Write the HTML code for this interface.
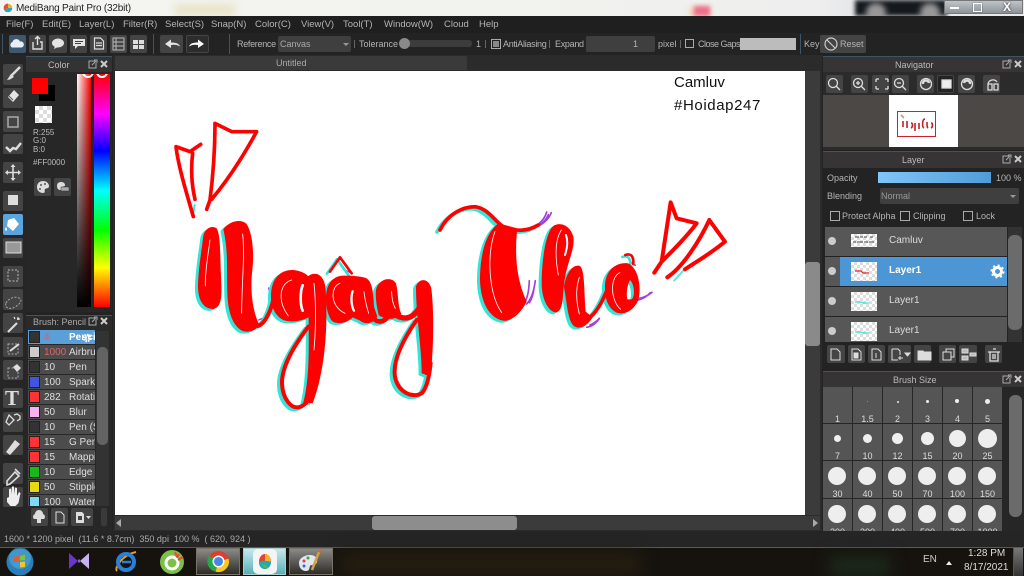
<!DOCTYPE html>
<html><head><meta charset="utf-8"><title>MediBang Paint Pro</title>
<style>
html,body{margin:0;padding:0;background:#222}
#r{position:relative;width:1024px;height:576px;overflow:hidden;background:#232323;font-family:"Liberation Sans",sans-serif;font-size:9px;color:#b4b4b4}
#r div,#r span.t,#r svg.a{position:absolute}
.t{position:absolute;white-space:nowrap;line-height:12px}
.m{font-size:9.500px}
.b{background:#444;border-radius:2px}
.h{background:#363434;border-top:1px solid #3f5566}
.c{color:#c8c8c8;text-align:center;line-height:14px}
.row{left:28px;width:67px;height:14px;background:#4c4c4c;overflow:hidden;color:#ddd;font-size:10px;line-height:15px}
.row i{position:absolute;left:1px;top:1px;width:11px;height:12px;border:1px solid #222;box-sizing:border-box}
.row u{position:absolute;left:16px;text-decoration:none}
.row s{position:absolute;left:41px;text-decoration:none;white-space:nowrap}
.cell{width:29px;background:#555;overflow:hidden;color:#ddd;text-align:center;font-size:9px}
.cell i{position:absolute;background:#eee;border-radius:50%}
.cell span{position:absolute;left:0;right:0;line-height:10px}
.lay{left:825px;width:182px;background:#575757;color:#ddd;overflow:hidden}
.chk{width:8px;height:8px;border:1px solid #aaa}
.thumb{background-color:#fff;background-image:linear-gradient(45deg,#ddd 25%,transparent 25%,transparent 75%,#ddd 75%),linear-gradient(45deg,#ddd 25%,transparent 25%,transparent 75%,#ddd 75%);background-size:6px 6px;background-position:0 0,3px 3px}
</style></head><body><div id="r">

<!-- title bar -->
<div style="left:0;top:0;width:1024px;height:16px;background:linear-gradient(90deg,#f4f4f2,#f2f2ee 50%,#eee 80%,#e6e8ea 850px)"></div>
<div style="left:175px;top:4px;width:60px;height:12px;background:#e8e4c8;filter:blur(4px)"></div>
<div style="left:690px;top:8px;width:20px;height:8px;background:#f3c9a0;filter:blur(3px)"></div>
<div style="left:694px;top:6px;width:16px;height:10px;background:#ee6f8c;filter:blur(2px)"></div>
<div style="left:855px;top:0;width:92px;height:16px;background:#15191e;filter:blur(2px)"></div>
<div style="left:866px;top:3px;width:20px;height:20px;border-radius:50%;background:#999;filter:blur(3px)"></div>
<div style="left:920px;top:3px;width:20px;height:20px;border-radius:50%;background:#999;filter:blur(3px)"></div>
<div style="left:944px;top:0;width:79px;height:14px;background:linear-gradient(#bfc4c8,#8e9398);border:1px solid #777;box-sizing:border-box"></div>
<div style="left:950px;top:7px;width:9px;height:2px;background:#fff"></div>
<div style="left:973px;top:3px;width:7px;height:7px;border:1px solid #fff;box-shadow:0 0 1px #333"></div>
<span class="t" style="left:1003px;top:0;color:#fff;font-size:12px;font-weight:bold;text-shadow:0 0 2px #222;line-height:14px">X</span>
<svg class="a" style="left:2px;top:2px" width="12" height="12" viewBox="0 0 12 12"><circle cx="6" cy="6" r="6" fill="#fff"/><path d="M6 1.500A4.500 4.500 0 0 0 2 8L6 6Z" fill="#e84f2f"/><path d="M6 1.500A4.500 4.500 0 0 1 10.400 6L6 6Z" fill="#f2b035"/><path d="M2 8A4.500 4.500 0 0 0 10.400 6L6 6Z" fill="#2aa6c8"/></svg>
<span class="t" style="left:16px;top:3px;color:#222;font-size:10px;letter-spacing:-.2px">MediBang Paint Pro (32bit)</span>

<!-- menu -->
<div style="left:0;top:16px;width:1024px;height:17px;background:#1f1f1f"></div>
<span class="t m" style="left:6px;top:19px">File(F)</span>
<span class="t m" style="left:42px;top:19px">Edit(E)</span>
<span class="t m" style="left:79px;top:19px">Layer(L)</span>
<span class="t m" style="left:123px;top:19px">Filter(R)</span>
<span class="t m" style="left:165px;top:19px">Select(S)</span>
<span class="t m" style="left:211px;top:19px">Snap(N)</span>
<span class="t m" style="left:255px;top:19px">Color(C)</span>
<span class="t m" style="left:301px;top:19px">View(V)</span>
<span class="t m" style="left:343px;top:19px">Tool(T)</span>
<span class="t m" style="left:384px;top:19px">Window(W)</span>
<span class="t m" style="left:444px;top:19px">Cloud</span>
<span class="t m" style="left:479px;top:19px">Help</span>

<!-- toolbar -->
<div style="left:0;top:33px;width:1024px;height:22px;background:#232323"></div>
<div style="left:2px;top:34px;width:1px;height:20px;background:#3a566c"></div>
<div style="left:153px;top:34px;width:1px;height:20px;background:#3a566c"></div>
<div style="left:229px;top:34px;width:1px;height:20px;background:#3a566c"></div>
<div style="left:800px;top:34px;width:1px;height:20px;background:#3a566c"></div>
<div class="b" style="left:9px;top:35px;width:17px;height:18px;background:#3e5870"></div>
<div class="b" style="left:29px;top:35px;width:17px;height:18px"></div>
<div class="b" style="left:49px;top:35px;width:18px;height:18px"></div>
<div class="b" style="left:70px;top:35px;width:17px;height:18px"></div>
<div class="b" style="left:90px;top:35px;width:17px;height:18px"></div>
<div class="b" style="left:110px;top:35px;width:17px;height:18px"></div>
<div class="b" style="left:130px;top:35px;width:17px;height:18px"></div>
<div class="b" style="left:160px;top:35px;width:23px;height:18px"></div>
<div class="b" style="left:186px;top:35px;width:23px;height:18px;background:#2d2d2d;border:1px solid #444;box-sizing:border-box"></div>
<svg class="a" style="left:0;top:33px" width="215" height="22" viewBox="0 0 215 22" fill="none">
<path d="M12 14.500a3 3 0 0 1 .5-5.500 4 4 0 0 1 7.500-.5 3 3 0 0 1 1.500 6Z" fill="#e8eef4"/>
<path d="M33 9v7h9V9h-2M37.500 12V4M35 6l2.500-2.500L40 6" stroke="#ddd" stroke-width="1.400"/>
<ellipse cx="58" cy="10" rx="6" ry="4.500" fill="#e4e4e4"/><path d="M55 13l-1 3 4-2Z" fill="#e4e4e4"/>
<path d="M73 6h12v7h-7l-3 3v-3h-2Z" fill="#e4e4e4"/><path d="M75 8.500h8M75 10.500h6" stroke="#444"/>
<path d="M94.500 5h6l3 3v8h-9Z M96 10h6M96 12.500h6" stroke="#ddd" stroke-width="1.200"/>
<path d="M113 5h11v12h-11Z M113 9h11M113 13h11M116 5v12" stroke="#bbb"/>
<path d="M133 7h5v4h-5ZM139 7h5v4h-5ZM133 12h5v4h-5ZM139 12h5v4h-5Z" fill="#ddd"/>
<path d="M165 11l6-4.500v3c5 0 8 1 9 4-3-2-6-2-9-1.500v3Z" fill="#e4e4e4"/>
<path d="M204 11l-6-4.500v3c-5 0-8 1-9 4 3-2 6-2 9-1.500v3Z" fill="#fff"/>
</svg>
<span class="t" style="left:237px;top:38px;letter-spacing:-.3px">Reference</span>
<div class="b" style="left:278px;top:36px;width:73px;height:16px;background:#3f3f3f"></div>
<span class="t" style="left:280px;top:38px;color:#aaa">Canvas</span>
<div style="left:343px;top:43px;width:0;height:0;border:3px solid transparent;border-top:3px solid #999"></div>
<div style="left:354px;top:40px;width:1px;height:8px;background:#666"></div>
<span class="t" style="left:359px;top:38px">Tolerance</span>
<div style="left:400px;top:40px;width:72px;height:7px;background:#3c3c3c;border-radius:3px"></div>
<div style="left:399px;top:38px;width:11px;height:11px;background:#8a8a8a;border-radius:50%"></div>
<span class="t" style="left:476px;top:38px">1</span>
<div style="left:485px;top:40px;width:1px;height:8px;background:#666"></div>
<div style="left:491px;top:39px;width:8px;height:8px;border:1px solid #aaa"></div>
<div style="left:493px;top:41px;width:6px;height:6px;background:#888"></div>
<span class="t" style="left:503px;top:38px;letter-spacing:-.3px">AntiAliasing</span>
<div style="left:549px;top:40px;width:1px;height:8px;background:#666"></div>
<span class="t" style="left:555px;top:38px;letter-spacing:-.3px">Expand</span>
<div class="b" style="left:586px;top:36px;width:69px;height:16px;background:#3f3f3f"></div>
<span class="t" style="left:633px;top:38px">1</span>
<span class="t" style="left:658px;top:38px">pixel</span>
<div style="left:680px;top:40px;width:1px;height:8px;background:#666"></div>
<div style="left:685px;top:39px;width:7px;height:7px;border:1px solid #aaa"></div>
<span class="t" style="left:698px;top:38px;letter-spacing:-.5px">Close Gaps</span>
<div style="left:740px;top:38px;width:56px;height:12px;background:#bcbcbc"></div>
<span class="t" style="left:804px;top:38px">Key</span>
<div class="b" style="left:820px;top:35px;width:46px;height:18px"></div>
<svg class="a" style="left:824px;top:37px" width="14" height="14" viewBox="0 0 14 14" fill="none" stroke="#ccc" stroke-width="1.200"><circle cx="7" cy="7" r="6"/><path d="M3 3l8 8"/></svg>
<span class="t" style="left:840px;top:38px">Reset</span>

<!-- left tools -->
<div style="left:0;top:55px;width:26px;height:476px;background:#262626"></div>
<div class="b" style="left:3px;top:64px;width:20px;height:21px"></div>
<div class="b" style="left:3px;top:88px;width:20px;height:20px"></div>
<div class="b" style="left:3px;top:111px;width:20px;height:21px"></div>
<div class="b" style="left:3px;top:134px;width:20px;height:20px"></div>
<div class="b" style="left:3px;top:162px;width:20px;height:21px"></div>
<div class="b" style="left:3px;top:191px;width:20px;height:20px"></div>
<div class="b" style="left:3px;top:214px;width:20px;height:21px;background:#5aa5de"></div>
<div class="b" style="left:3px;top:238px;width:20px;height:20px"></div>
<div class="b" style="left:3px;top:266px;width:20px;height:21px"></div>
<div class="b" style="left:3px;top:289px;width:20px;height:21px"></div>
<div class="b" style="left:3px;top:313px;width:20px;height:20px"></div>
<div class="b" style="left:3px;top:337px;width:20px;height:20px"></div>
<div class="b" style="left:3px;top:360px;width:20px;height:20px"></div>
<div class="b" style="left:3px;top:388px;width:20px;height:20px"></div>
<div class="b" style="left:3px;top:412px;width:20px;height:20px"></div>
<div class="b" style="left:3px;top:435px;width:20px;height:20px"></div>
<div class="b" style="left:3px;top:463px;width:20px;height:21px"></div>
<div class="b" style="left:3px;top:487px;width:20px;height:20px"></div>
<svg class="a" style="left:0;top:55px" width="26" height="460" viewBox="0 0 26 460" fill="none">
<path d="M20 12L11 21" stroke="#ddd" stroke-width="2.500"/><path d="M11 19l3 3-4 2.500-3 .5Z" fill="#ddd"/>
<path d="M14 35l5 5-6 7-5-5Z" fill="#e6e6e6"/><path d="M9 41l4 4" stroke="#555"/>
<rect x="8" y="62" width="10" height="10" stroke="#aaa" stroke-width="1.500"/>
<path d="M6 92l4 4 3-3 3 1 5-6" stroke="#ddd" stroke-width="2.500"/>
<path d="M13 111v13M7 117.500h12" stroke="#ddd" stroke-width="1.600"/><path d="M13 109l2.500 3h-5ZM13 126l2.500-3h-5ZM5 117.500l3-2.500v5ZM21 117.500l-3-2.500v5Z" fill="#ddd"/>
<rect x="8" y="140" width="10" height="10" fill="#ddd"/>
<path d="M8 165l6-2 5 6-6 7-6-5Z" fill="#fff"/><path d="M6 172q-2 3 0 4 2-1 0-4Z" fill="#fff"/>
<rect x="6" y="187" width="15" height="11" fill="#999" stroke="#ddd"/>
<rect x="8" y="215" width="10" height="11" stroke="#bbb" stroke-dasharray="2 1.500"/>
<path d="M6 248c3-5 9-7 13-5s1 6-4 9-11 1-9-4Z" stroke="#aaa" stroke-dasharray="2 1.500"/>
<path d="M8 277l9-9" stroke="#ddd" stroke-width="2"/><path d="M18 262v3M20 264h-3M14 262l1 2" stroke="#fff"/>
<rect x="8" y="289" width="10" height="10" stroke="#aaa" stroke-dasharray="2 1.500"/><path d="M10 296l9-7" stroke="#ddd" stroke-width="2"/>
<rect x="8" y="313" width="10" height="10" stroke="#aaa" stroke-dasharray="2 1.500"/><path d="M13 312l4-3 4 4-4 4Z" fill="#ddd"/>
<path d="M9 360l5 5-5 5-3-3ZM14 360l3-1 3 2v3l-3 2" stroke="#ddd" stroke-width="1.300"/>
<path d="M6 397l9-12 5 4-10 11Z" fill="#ddd"/>
<path d="M7 426l8-9 4 4-9 8-3 1Z M15 414l5 5" stroke="#ddd" stroke-width="1.600"/>
<path d="M7 447v-4l2-1v-8l2-.5v6l1-8 2 0v8l1-7 2 .5v8l2-4 1.500 1-2 10-3 3h-5Z" fill="#eee"/>
</svg>
<span class="t" style="left:5px;top:388px;color:#ddd;font:bold 21px 'Liberation Serif',serif;line-height:20px">T</span>

<!-- color panel -->
<div style="left:26px;top:57px;width:86px;height:255px;background:#272727"></div>
<div class="h c" style="left:26px;top:56px;width:86px;height:15px;background:#333"></div>
<span class="t" style="left:48px;top:59px;color:#bbb">Color</span>
<div style="left:39px;top:85px;width:16px;height:16px;background:#000"></div>
<div style="left:32px;top:78px;width:16px;height:16px;background:#f00"></div>
<div class="thumb" style="left:35px;top:106px;width:17px;height:17px;background-size:8px 8px;background-position:0 0,4px 4px"></div>
<span class="t" style="left:33px;top:127px;font-size:8px;color:#bbb">R:255</span>
<span class="t" style="left:33px;top:135px;font-size:8px;color:#bbb">G:0</span>
<span class="t" style="left:33px;top:144px;font-size:8px;color:#bbb">B:0</span>
<span class="t" style="left:33px;top:157px;font-size:8px;color:#bbb">#FF0000</span>
<div class="b" style="left:34px;top:178px;width:17px;height:18px"></div>
<div class="b" style="left:54px;top:178px;width:17px;height:18px"></div>
<svg class="a" style="left:34px;top:178px" width="38" height="18" viewBox="0 0 38 18"><path d="M3 9c0-4 3-6 6-6s6 2 6 5-3 2-4 3 1 4-2 4-6-2-6-6Z" fill="#ddd"/><circle cx="7" cy="7" r="1" fill="#555"/><circle cx="11" cy="6" r="1" fill="#555"/><circle cx="6" cy="11" r="1" fill="#555"/><path d="M23 8c0-3 2-4 4-4s4 1 4 3-2 1-3 2 0 3-2 3-3-2-3-4Z" fill="#ddd"/><rect x="27" y="9" width="8" height="4" fill="#aaa" stroke="#333" stroke-width=".5"/></svg>
<div style="left:77px;top:74px;width:14px;height:233px;background:linear-gradient(transparent,#000),linear-gradient(90deg,#fff,#f00)"></div>
<div style="left:94px;top:74px;width:16px;height:233px;background:linear-gradient(#f00,#f0f 17%,#00f 33%,#0ff 50%,#0f0 67%,#ff0 83%,#f00)"></div>
<div style="left:82px;top:66px;width:8px;height:8px;border:2px solid #fff;border-radius:50%;clip-path:inset(8px 0 0 0)"></div>
<div style="left:96px;top:66px;width:8px;height:8px;border:2px solid #fff;border-radius:50%;clip-path:inset(8px 0 0 0)"></div>
<svg class="a" style="left:87px;top:59px" width="22" height="11" viewBox="0 0 22 11" fill="none" stroke="#aaa"><path d="M8 2H2v7h7V4M5 6l4-4M7 1h3v3"/><path d="M14 2l6 6M20 2l-6 6" stroke="#ccc" stroke-width="2"/></svg>

<!-- brush panel -->
<div style="left:26px;top:315px;width:86px;height:216px;background:#272727"></div>
<div class="h" style="left:26px;top:315px;width:86px;height:15px;background:#2a2a2a"></div>
<span class="t" style="left:33px;top:316px;color:#aaa">Brush: Pencil</span>
<svg class="a" style="left:87px;top:316px" width="22" height="11" viewBox="0 0 22 11" fill="none" stroke="#aaa"><path d="M8 2H2v7h7V4M5 6l4-4M7 1h3v3"/><path d="M14 2l6 6M20 2l-6 6" stroke="#ccc" stroke-width="2"/></svg>
<div class="row" style="top:330px;background:#5a9fd8"><i style="background:#333"></i><u style="color:#e06060">4</u><s style="color:#fff;font-weight:bold">Pencil</s></div>
<svg class="a" style="left:82px;top:333px" width="10" height="10" viewBox="0 0 10 10"><circle cx="5" cy="5" r="3" fill="none" stroke="#fff" stroke-width="2.500" stroke-dasharray="1.500 .8"/></svg>
<div class="row" style="top:345px"><i style="background:#ccc"></i><u style="color:#d66">1000</u><s>Airbrush</s></div>
<div class="row" style="top:360px"><i style="background:#333"></i><u>10</u><s>Pen</s></div>
<div class="row" style="top:375px"><i style="background:#4055e0"></i><u>100</u><s>Sparkle</s></div>
<div class="row" style="top:390px"><i style="background:#f33"></i><u>282</u><s>Rotation</s></div>
<div class="row" style="top:405px"><i style="background:#f9b0f0"></i><u>50</u><s>Blur</s></div>
<div class="row" style="top:420px"><i style="background:#333"></i><u>10</u><s>Pen (S)</s></div>
<div class="row" style="top:435px"><i style="background:#f33"></i><u>15</u><s>G Pen</s></div>
<div class="row" style="top:450px"><i style="background:#f33"></i><u>15</u><s>Mapping</s></div>
<div class="row" style="top:465px"><i style="background:#1ab81a"></i><u>10</u><s>Edge Pen</s></div>
<div class="row" style="top:480px"><i style="background:#e8d810"></i><u>50</u><s>Stipple</s></div>
<div class="row" style="top:495px;height:11px"><i style="background:#7fd8f8"></i><u>100</u><s>Watercolor</s></div>
<div style="left:96px;top:331px;width:13px;height:175px;background:#333"></div>
<div style="left:97px;top:347px;width:11px;height:98px;background:#636363;border-radius:5px"></div>
<div class="b" style="left:31px;top:508px;width:17px;height:18px"></div>
<div class="b" style="left:51px;top:508px;width:17px;height:18px"></div>
<div class="b" style="left:71px;top:508px;width:22px;height:18px"></div>
<div class="b" style="left:101px;top:508px;width:6px;height:18px;background:#3a3a3a"></div>
<svg class="a" style="left:31px;top:508px" width="62" height="18" viewBox="0 0 62 18" fill="none"><path d="M3 11a3 3 0 0 1 1-5 4 4 0 0 1 8 0 3 3 0 0 1 1 5h-3v4H6v-4Z" fill="#ddd"/><path d="M25 4h5l3 3v8h-8Z" stroke="#ddd"/><path d="M45 4h6l2 2v9h-8Z" fill="#ddd"/><rect x="47" y="8" width="4" height="4" fill="#444"/><path d="M55 8h5l-2.500 3Z" fill="#ddd"/></svg>

<!-- canvas area -->
<div style="left:113px;top:55px;width:709px;height:476px;background:#2b2b2b"></div>
<div style="left:115px;top:56px;width:352px;height:14px;background:#3a3a3a;border-radius:2px 2px 0 0"></div>
<span class="t" style="left:276px;top:57px;color:#aaa">Untitled</span>
<div style="left:115px;top:71px;width:690px;height:444px;background:#fff;overflow:hidden">
<span class="t" style="left:559px;top:3px;color:#111;font-size:15px;line-height:18px">Camluv</span>
<span class="t" style="left:559px;top:26px;color:#111;font-size:15px;line-height:18px;letter-spacing:.6px">#Hoidap247</span>
</div>

<svg class="a" style="left:115px;top:71px" width="690" height="444" viewBox="115 71 690 444" fill="none" role="img" aria-label="Ngày Thơ">
<!-- purple marks -->
<g transform="translate(420 190) scale(.3333)" stroke="#a040d8" stroke-width="5" stroke-linecap="round">
<path d="M345 108c20-10 30-25 35-42M352 110c20-10 35-25 42-42M360 104c12-8 20-18 25-30"/>
<path d="M312 340c12-15 15-40 16-68M320 342c15-15 22-40 26-70M328 338c8-12 12-26 14-44"/>
<path d="M655 330c15-4 28-12 36-22M658 325c14-2 28-10 38-18"/>
<path d="M500 412c15-2 28-12 38-26M510 405c10-4 20-10 28-20"/>
<path d="M632 216l14 10" stroke="#5a70e0"/>
</g>
<g transform="translate(160 110) scale(.3333)" stroke="#a040d8" stroke-width="4" stroke-linecap="round">
<path d="M296 630l14-6M326 534l3 14M500 530l14-8M555 480l20 10M805 820l-2-18"/>
</g>

<!-- cyan-shadowed lettering -->
<g style="filter:drop-shadow(-2.500px 2px 0 #2fe6d8)">
<g transform="translate(160 110) scale(.3333)">
<g fill="#f00">
<path d="M130 378C135 355 155 345 170 355 182 375 180 430 183 500 186 560 186 590 160 597 130 597 112 570 114 520 116 470 125 420 130 378Z"/>
<path d="M190 358C205 335 240 325 258 340 275 360 284 420 277 480 270 540 277 600 296 640 292 662 270 668 250 664 220 650 204 610 202 550 200 480 205 420 190 358Z"/>
<path d="M333 558C333 505 362 478 400 480 420 482 440 490 450 505L450 620C430 632 395 640 370 630 345 618 333 590 333 558Z"/>
<path d="M438 505C462 478 495 492 497 540 504 650 496 780 458 880L430 878C450 800 446 700 446 625 446 580 430 540 438 505Z"/>
<path d="M498 565C498 520 520 497 552 497 585 497 600 500 615 503 635 510 640 540 642 590L652 620C640 642 615 645 600 632L578 622C560 640 530 645 515 632 503 615 498 590 498 565Z"/>
<path d="M648 540C656 505 695 498 708 520 716 550 712 585 724 612 705 632 675 630 656 615 650 590 646 565 648 540Z"/>
<path d="M768 530C776 503 806 503 814 535 822 600 822 700 812 800L785 790C786 720 768 620 768 530Z"/>
</g>
<g stroke="#f00" stroke-width="12" stroke-linecap="round" stroke-linejoin="round">
<path d="M292 648C312 645 330 610 340 570"/>
<path d="M445 650C400 710 365 770 366 820 368 870 395 895 415 892 440 888 455 860 465 820"/>
<path d="M510 485L540 442 575 490" stroke-width="8"/>
<path d="M640 625C655 640 670 635 680 625" stroke-width="14"/>
<path d="M712 618C740 632 765 622 782 585" stroke-width="16"/>
<path d="M770 630C725 695 698 755 705 800 715 850 760 865 785 850 800 835 808 800 812 760"/>
</g>
<g stroke="#fff" stroke-linecap="round">
<path d="M428 526C420 545 420 585 428 602" stroke-width="8"/>
<path d="M578 544C572 560 574 590 582 602" stroke-width="7"/>
<path d="M150 390C145 430 135 480 136 528M248 372C255 440 245 520 245 610M395 510C360 520 350 570 385 618M462 520C468 580 468 650 462 720M540 520C510 530 510 590 555 610M612 545C615 570 620 590 626 610M695 545C695 565 700 585 706 595" stroke-width="2.500"/>
</g>
</g>
<g transform="translate(420 190) scale(.3333)">
<g fill="#f00">
<path d="M235 100L292 115C285 180 285 260 320 335 300 375 270 395 250 392 210 385 182 340 180 270 180 200 195 130 235 100Z"/>
<path d="M365 280C365 220 375 130 400 108 420 95 450 105 460 140 465 170 450 200 440 240 432 270 430 300 428 330 424 360 415 368 405 367 380 360 365 320 365 280Z"/>
<path d="M432 290C440 245 460 222 480 228 495 240 492 310 497 365L518 382C500 410 480 418 465 410 445 400 442 350 432 290Z"/>
<path fill-rule="evenodd" d="M555 290C555 240 590 215 625 220 655 235 665 290 655 330 640 365 610 375 590 368 565 355 555 330 555 290ZM630 270C645 285 645 320 635 328L622 328C618 310 622 285 630 270Z"/>
</g>
<g stroke="#f00" stroke-linecap="round" stroke-linejoin="round">
<path d="M60 120C85 70 130 50 165 50 205 55 225 95 250 110 290 125 320 125 355 105" stroke-width="11"/>
<path d="M505 385C530 370 550 330 565 290" stroke-width="11"/>
<path d="M616 195C630 190 642 195 640 222" stroke-width="8"/>
</g>
<g stroke="#fff" stroke-linecap="round">
<path d="M438 135C445 155 440 180 435 195" stroke-width="6"/>
<path d="M225 125C200 190 205 310 245 368M424 120C405 150 405 200 415 255M478 262C465 300 470 340 478 372M600 248C570 260 570 330 602 358" stroke-width="2.500"/>
</g>
</g>
</g>
<!-- arrows: plain red -->
<g transform="translate(160 110) scale(.3333)" stroke-linecap="round" stroke-linejoin="round">
<path d="M107 285L103 312M143 296L150 275" stroke="#3fe6d8" stroke-width="6" transform="translate(-3 0)"/>
<g stroke="#f00" stroke-width="11">
<path d="M100 320C80 250 55 170 48 110L90 125 122 103M98 130C92 180 95 225 105 268"/>
<path d="M140 298L150 270C160 190 165 110 165 40L215 65 290 65C265 110 220 190 155 268"/>
</g>
</g>
<g transform="translate(420 190) scale(.3333)" stroke-linecap="round" stroke-linejoin="round">
<path d="M762 272L790 242" stroke="#5ee8dc" stroke-width="6"/>
<g stroke="#f00" stroke-width="12">
<path d="M703 248L725 215 752 37 770 85 830 100C800 140 760 180 725 215"/>
<path d="M742 262C790 230 840 150 868 90L915 155C880 185 830 215 795 238"/>
</g>
</g>
</svg>

<!-- canvas scrollbars -->
<div style="left:805px;top:71px;width:15px;height:444px;background:#3b3b3b"></div>
<div style="left:805px;top:262px;width:15px;height:84px;background:#8a8a8a;border-radius:3px"></div>
<div style="left:115px;top:516px;width:705px;height:14px;background:#3b3b3b"></div>
<div style="left:372px;top:516px;width:145px;height:14px;background:#8d8d8d;border-radius:3px"></div>
<div style="left:116px;top:519px;width:0;height:0;border:4px solid transparent;border-right:5px solid #aaa;border-left:0"></div>
<div style="left:813px;top:519px;width:0;height:0;border:4px solid transparent;border-left:5px solid #aaa;border-right:0"></div>

<!-- navigator -->
<div style="left:823px;top:56px;width:201px;height:94px;background:#2b2b2b"></div>
<div class="h" style="left:823px;top:56px;width:201px;height:15px"></div>
<span class="t" style="left:895px;top:59px;color:#bbb">Navigator</span>
<svg class="a" style="left:1001px;top:59px" width="22" height="11" viewBox="0 0 22 11" fill="none" stroke="#aaa"><path d="M8 2H2v7h7V4M5 6l4-4M7 1h3v3"/><path d="M14 2l6 6M20 2l-6 6" stroke="#ccc" stroke-width="2"/></svg>
<div class="b" style="left:826px;top:75px;width:17px;height:18px"></div>
<div class="b" style="left:851px;top:75px;width:17px;height:18px"></div>
<div class="b" style="left:872px;top:75px;width:17px;height:18px"></div>
<div class="b" style="left:892px;top:75px;width:17px;height:18px"></div>
<div class="b" style="left:917px;top:75px;width:17px;height:18px"></div>
<div class="b" style="left:937px;top:75px;width:17px;height:18px;background:#232323;border:1px solid #444;box-sizing:border-box"></div>
<div class="b" style="left:958px;top:75px;width:17px;height:18px"></div>
<div class="b" style="left:983px;top:75px;width:17px;height:18px"></div>
<svg class="a" style="left:823px;top:72px" width="180" height="24" viewBox="0 0 180 24" fill="none" stroke="#ddd" stroke-width="1.300">
<circle cx="10" cy="11" r="4.500"/><path d="M13 14l4 4"/>
<circle cx="35" cy="11" r="4.500"/><path d="M38 14l4 4M33 11h4M35 9v4"/>
<path d="M53 7h3M53 7v3M65 7h-3M65 7v3M53 17h3M53 17v-3M65 17h-3M65 17v-3"/>
<circle cx="76" cy="11" r="4.500"/><path d="M79 14l4 4M74 11h4"/>
<circle cx="103" cy="12" r="5.500"/><path d="M100 12a3 3 0 0 1 6-1" stroke-width="2.500"/>
<rect x="119" y="8" width="9" height="8" fill="#eee"/>
<circle cx="144" cy="12" r="5.500"/><path d="M147 12a3 3 0 0 0-6-1" stroke-width="2.500"/>
<path d="M165 12v6h4v-6ZM171 12v6h4v-6ZM165 12a5 5 0 0 1 9-2"/>
</svg>
<div style="left:823px;top:95px;width:201px;height:52px;background:#4b4845"></div>
<div style="left:889px;top:95px;width:69px;height:52px;background:#fff"></div>
<div style="left:897px;top:111px;width:37px;height:24px;border:1px solid #d02030"></div>
<svg class="a" style="left:897px;top:111px" width="39" height="26" viewBox="0 0 39 26" fill="none" stroke="#c02028" stroke-width="1.600"><path d="M6 10v6M10 10v7M14 12c2 0 2 4 0 5M18 12v8M22 12v6M28 8c-3 0-3 8-1 9M30 11c0 4 0 5 1 6M34 12c2 0 2 4 0 5"/><path d="M4 4l3 3" stroke="#d88"/></svg>

<!-- layer -->
<div style="left:823px;top:150px;width:201px;height:220px;background:#232323"></div>
<div class="h" style="left:823px;top:151px;width:201px;height:16px"></div>
<span class="t" style="left:902px;top:154px;color:#bbb">Layer</span>
<svg class="a" style="left:1001px;top:154px" width="22" height="11" viewBox="0 0 22 11" fill="none" stroke="#aaa"><path d="M8 2H2v7h7V4M5 6l4-4M7 1h3v3"/><path d="M14 2l6 6M20 2l-6 6" stroke="#ccc" stroke-width="2"/></svg>
<span class="t" style="left:827px;top:172px">Opacity</span>
<div style="left:878px;top:172px;width:113px;height:11px;background:linear-gradient(90deg,#80c6f8,#4f9cd9)"></div>
<span class="t" style="left:996px;top:172px">100 %</span>
<span class="t" style="left:827px;top:190px">Blending</span>
<div class="b" style="left:880px;top:188px;width:139px;height:16px;background:#3f3f3f"></div>
<span class="t" style="left:881px;top:190px;color:#999">Normal</span>
<div style="left:1010px;top:195px;width:0;height:0;border:3px solid transparent;border-top:3px solid #999"></div>
<div class="chk" style="left:830px;top:211px"></div><span class="t" style="left:842px;top:210px">Protect Alpha</span>
<div class="chk" style="left:900px;top:211px"></div><span class="t" style="left:913px;top:210px">Clipping</span>
<div class="chk" style="left:963px;top:211px"></div><span class="t" style="left:976px;top:210px">Lock</span>

<div class="lay" style="top:227px;height:29px"></div>
<div class="lay" style="top:257px;height:29px"></div>
<div style="left:840px;top:257px;width:167px;height:29px;background:#4d96d6"></div>
<div class="lay" style="top:287px;height:29px"></div>
<div class="lay" style="top:317px;height:25px"></div>
<div style="left:828px;top:237px;width:8px;height:8px;border-radius:50%;background:#ccc"></div>
<div style="left:828px;top:267px;width:8px;height:8px;border-radius:50%;background:#ccc"></div>
<div style="left:828px;top:297px;width:8px;height:8px;border-radius:50%;background:#ccc"></div>
<div style="left:828px;top:327px;width:8px;height:8px;border-radius:50%;background:#ccc"></div>
<div class="thumb" style="left:851px;top:234px;width:26px;height:13px"></div>
<svg class="a" style="left:851px;top:234px" width="26" height="13" viewBox="0 0 26 13" fill="none" stroke="#444"><path d="M4 3h4M9 3h3M13 3h3M2 8h3M6 8h6M13 8h4M18 8h5M19 3h3" /></svg>
<div class="thumb" style="left:851px;top:262px;width:26px;height:19px"></div>
<svg class="a" style="left:851px;top:262px" width="26" height="19" viewBox="0 0 26 19" fill="none" stroke="#e02030" stroke-width="1.200"><path d="M4 9h6l2 2h6"/></svg>
<div class="thumb" style="left:851px;top:292px;width:26px;height:19px"></div>
<svg class="a" style="left:851px;top:292px" width="26" height="19" viewBox="0 0 26 19" fill="none" stroke="#40e0d0" stroke-width="1.200"><path d="M4 10h6l2 1h6"/></svg>
<div class="thumb" style="left:851px;top:322px;width:26px;height:19px"></div>
<svg class="a" style="left:851px;top:322px" width="26" height="19" viewBox="0 0 26 19" fill="none" stroke="#40e0d0" stroke-width="1.200"><path d="M4 10h6l2 1h6"/></svg>
<span class="t" style="left:889px;top:235px;color:#ddd;font-size:10px">Camluv</span>
<span class="t" style="left:889px;top:265px;color:#fff;font-weight:bold;font-size:10px">Layer1</span>
<span class="t" style="left:889px;top:295px;color:#ddd;font-size:10px">Layer1</span>
<span class="t" style="left:889px;top:325px;color:#ddd;font-size:10px">Layer1</span>
<svg class="a" style="left:990px;top:264px" width="15" height="15" viewBox="0 0 15 15"><circle cx="7.500" cy="7.500" r="4" fill="none" stroke="#fff" stroke-width="3"/><circle cx="7.500" cy="7.500" r="6" fill="none" stroke="#fff" stroke-width="2" stroke-dasharray="2 2.700"/></svg>
<div style="left:1008px;top:227px;width:14px;height:115px;background:#333"></div>
<div style="left:1008px;top:235px;width:14px;height:95px;background:#6b6b6b;border-radius:6px"></div>
<div class="b" style="left:827px;top:345px;width:18px;height:18px"></div>
<div class="b" style="left:848px;top:345px;width:17px;height:18px"></div>
<div class="b" style="left:868px;top:345px;width:17px;height:18px"></div>
<div class="b" style="left:888px;top:345px;width:23px;height:18px"></div>
<div class="b" style="left:914px;top:345px;width:17px;height:18px"></div>
<div class="b" style="left:939px;top:345px;width:17px;height:18px"></div>
<div class="b" style="left:959px;top:345px;width:18px;height:18px"></div>
<div class="b" style="left:985px;top:345px;width:17px;height:18px"></div>
<svg class="a" style="left:823px;top:345px" width="182" height="18" viewBox="0 0 182 18" fill="none" stroke="#ddd">
<path d="M8 4h6l3 3v8H8Z"/><path d="M29 4h6l3 3v8h-9Z"/><rect x="31" y="8" width="4" height="5" fill="#ddd"/>
<path d="M49 4h6l3 3v8h-9ZM53 8v5"/><path d="M69 4h6l2 2v4M69 4v11h6M75 13h5M77 11v4"/><path d="M82 8h5l-2.500 3Z" fill="#ddd"/>
<path d="M95 6h5l1 1h7v8H95Z" fill="#ddd"/>
<rect x="120" y="7" width="8" height="8"/><path d="M123 7V4h8v8h-3"/>
<path d="M139 4h6v4h-6ZM139 11h6v4h-6ZM147 8h6v3h-6Z" fill="#bbb"/>
<path d="M165 7h12M167 7v9h8V7M170 4h3M170 9v5M172 9v5" stroke-width="1.300"/>
</svg>

<!-- brush size -->
<div style="left:823px;top:371px;width:201px;height:160px;background:#262626"></div>
<div class="h" style="left:823px;top:371px;width:201px;height:15px"></div>
<span class="t" style="left:893px;top:374px;color:#bbb">Brush Size</span>
<svg class="a" style="left:1001px;top:374px" width="22" height="11" viewBox="0 0 22 11" fill="none" stroke="#aaa"><path d="M8 2H2v7h7V4M5 6l4-4M7 1h3v3"/><path d="M14 2l6 6M20 2l-6 6" stroke="#ccc" stroke-width="2"/></svg>
<div class="cell" style="left:823px;top:387px;height:36px"><span style="top:27px">1</span></div>
<div class="cell" style="left:853px;top:387px;height:36px"><i style="left:14px;top:14px;width:1px;height:1px;background:#999"></i><span style="top:27px">1.5</span></div>
<div class="cell" style="left:883px;top:387px;height:36px"><i style="left:14px;top:14px;width:2px;height:2px"></i><span style="top:27px">2</span></div>
<div class="cell" style="left:913px;top:387px;height:36px"><i style="left:13px;top:13px;width:3px;height:3px"></i><span style="top:27px">3</span></div>
<div class="cell" style="left:943px;top:387px;height:36px"><i style="left:12px;top:12px;width:4px;height:4px"></i><span style="top:27px">4</span></div>
<div class="cell" style="left:973px;top:387px;height:36px"><i style="left:12px;top:12px;width:5px;height:5px"></i><span style="top:27px">5</span></div>
<div class="cell" style="left:823px;top:424px;height:36px"><i style="left:11px;top:11px;width:7px;height:7px"></i><span style="top:27px">7</span></div>
<div class="cell" style="left:853px;top:424px;height:36px"><i style="left:10px;top:10px;width:9px;height:9px"></i><span style="top:27px">10</span></div>
<div class="cell" style="left:883px;top:424px;height:36px"><i style="left:9px;top:9px;width:11px;height:11px"></i><span style="top:27px">12</span></div>
<div class="cell" style="left:913px;top:424px;height:36px"><i style="left:8px;top:8px;width:13px;height:13px"></i><span style="top:27px">15</span></div>
<div class="cell" style="left:943px;top:424px;height:36px"><i style="left:6px;top:6px;width:17px;height:17px"></i><span style="top:27px">20</span></div>
<div class="cell" style="left:973px;top:424px;height:36px"><i style="left:5px;top:5px;width:19px;height:19px"></i><span style="top:27px">25</span></div>
<div class="cell" style="left:823px;top:461px;height:37px"><i style="left:5px;top:6px;width:18px;height:18px"></i><span style="top:28px">30</span></div>
<div class="cell" style="left:853px;top:461px;height:37px"><i style="left:5px;top:6px;width:18px;height:18px"></i><span style="top:28px">40</span></div>
<div class="cell" style="left:883px;top:461px;height:37px"><i style="left:5px;top:6px;width:18px;height:18px"></i><span style="top:28px">50</span></div>
<div class="cell" style="left:913px;top:461px;height:37px"><i style="left:5px;top:6px;width:18px;height:18px"></i><span style="top:28px">70</span></div>
<div class="cell" style="left:943px;top:461px;height:37px"><i style="left:5px;top:6px;width:18px;height:18px"></i><span style="top:28px">100</span></div>
<div class="cell" style="left:973px;top:461px;height:37px"><i style="left:5px;top:6px;width:18px;height:18px"></i><span style="top:28px">150</span></div>
<div class="cell" style="left:823px;top:499px;height:32px"><i style="left:5px;top:6px;width:18px;height:18px"></i><span style="top:28px">200</span></div>
<div class="cell" style="left:853px;top:499px;height:32px"><i style="left:5px;top:6px;width:18px;height:18px"></i><span style="top:28px">300</span></div>
<div class="cell" style="left:883px;top:499px;height:32px"><i style="left:5px;top:6px;width:18px;height:18px"></i><span style="top:28px">400</span></div>
<div class="cell" style="left:913px;top:499px;height:32px"><i style="left:5px;top:6px;width:18px;height:18px"></i><span style="top:28px">500</span></div>
<div class="cell" style="left:943px;top:499px;height:32px"><i style="left:5px;top:6px;width:18px;height:18px"></i><span style="top:28px">700</span></div>
<div class="cell" style="left:973px;top:499px;height:32px"><i style="left:5px;top:6px;width:18px;height:18px"></i><span style="top:28px">1000</span></div>
<div style="left:1009px;top:395px;width:13px;height:122px;background:#6b6b6b;border-radius:6px"></div>

<!-- status -->
<div style="left:0;top:531px;width:1024px;height:16px;background:#252525"></div>
<span class="t" style="left:4px;top:533px;color:#aaa">1600 * 1200 pixel &nbsp;(11.6 * 8.7cm) &nbsp;350 dpi &nbsp;100 % &nbsp;( 620, 924 )</span>
<div style="left:0;top:547px;width:1024px;height:1px;background:#5a5a55"></div>

<!-- taskbar -->
<div style="left:0;top:548px;width:1024px;height:28px;background:#16130f"></div>
<div style="left:340px;top:552px;width:300px;height:24px;background:#241d10;filter:blur(8px)"></div>
<div style="left:830px;top:556px;width:60px;height:20px;background:#1c2a1a;filter:blur(8px)"></div>
<svg class="a" style="left:5px;top:548px" width="30" height="28" viewBox="0 0 30 28"><circle cx="15" cy="14" r="13.500" fill="#2a7fb8"/><circle cx="15" cy="10" r="11" fill="#5fb4e0" opacity=".45"/><path d="M9 9l5-1v5l-5 .5Z" fill="#e85a30"/><path d="M15 8l5-1.500V12l-5 .5Z" fill="#7cc440"/><path d="M9 14.500l5-.5v5l-5-1Z" fill="#38a0e0"/><path d="M15 14l5-.5V19l-5 .5Z" fill="#f4c430"/></svg>
<svg class="a" style="left:67px;top:550px" width="24" height="22" viewBox="0 0 24 22"><path d="M2 3l9 8-9 8Z" fill="#6a35c8"/><path d="M22 3l-9 8 9 8Z" fill="#c8b0f5"/><path d="M11 11l2 0" stroke="#8a5ae0" stroke-width="3"/></svg>
<svg class="a" style="left:112px;top:549px" width="27" height="25" viewBox="0 0 27 25" fill="none"><path d="M5 22C2 19 10 6 24 3" stroke="#e0a020" stroke-width="2"/><circle cx="14" cy="13" r="8" stroke="#2a80d8" stroke-width="4"/><path d="M10 13h9" stroke="#2a80d8" stroke-width="2.500"/></svg>
<svg class="a" style="left:159px;top:548px" width="26" height="26" viewBox="0 0 26 26" fill="none"><circle cx="13" cy="14" r="12" fill="#7cc04a"/><circle cx="13" cy="15" r="6" fill="#7cc04a" stroke="#fff" stroke-width="3"/><path d="M16 4l2 5M20 6l-2 4M24 9l-5 3" stroke="#e05030" stroke-width="2"/></svg>
<div style="left:196px;top:548px;width:44px;height:27px;background:linear-gradient(#8a8a86,#2f2c28);border:1px solid #77736a;box-sizing:border-box"></div>
<svg class="a" style="left:207px;top:550px" width="23" height="23" viewBox="0 0 24 24"><circle cx="12" cy="12" r="11" fill="#e33b2e"/><path d="M12 12L22.500 9A11 11 0 0 1 9 22.600Z" fill="#f8c81e"/><path d="M12 12L9 22.600A11 11 0 0 1 2 6Z" fill="#2aa64a"/><circle cx="12" cy="12" r="5.500" fill="#4a86e8" stroke="#fff" stroke-width="1.500"/></svg>
<div style="left:243px;top:548px;width:43px;height:27px;background:linear-gradient(#c8e8ea,#58b0b8);border:1px solid #aacccc;box-sizing:border-box"></div>
<div style="left:253px;top:549px;width:24px;height:25px;background:#f4f4f4;border-radius:5px"></div>
<svg class="a" style="left:257px;top:553px" width="16" height="17" viewBox="0 0 16 17"><ellipse cx="8" cy="8.500" rx="6" ry="7.500" fill="#e8402c"/><path d="M8 1c4 0 6 4 6 7.500L8 9Z" fill="#f4b030"/><path d="M2 9c2-2 8-1 12-.5C14 13 11 16 8 16 4 16 2 13 2 9Z" fill="#20a8c0"/><path d="M5 11c3 0 5 1 6 4-3 1-5 0-6-4Z" fill="#50b850"/></svg>
<div style="left:289px;top:548px;width:44px;height:27px;background:linear-gradient(#8a8a86,#2f2c28);border:1px solid #77736a;box-sizing:border-box"></div>
<svg class="a" style="left:297px;top:549px" width="27" height="25" viewBox="0 0 27 25"><path d="M2 14c0-5 6-8 11-8s8 3 7 7-6 2-7 4 0 5-4 5-7-3-7-8Z" fill="#dfe6ee"/><circle cx="7" cy="12" r="1.500" fill="#e04040"/><circle cx="11" cy="9" r="1.500" fill="#40a040"/><circle cx="7" cy="17" r="1.500" fill="#4060e0"/><path d="M15 21L22 3" stroke="#d8a040" stroke-width="2.500"/><path d="M22 3l2-2" stroke="#e06030" stroke-width="2.500"/></svg>
<span class="t" style="left:923px;top:554px;color:#ccc;font-size:10px">EN</span>
<div style="left:946px;top:561px;width:0;height:0;border:3px solid transparent;border-bottom:4px solid #eee;border-top:0"></div>
<span class="t" style="left:968px;top:548px;color:#ddd;font-size:10px">1:28 PM</span>
<span class="t" style="left:964px;top:562px;color:#ddd;font-size:10px">8/17/2021</span>
<div style="left:1013px;top:548px;width:10px;height:28px;background:linear-gradient(#777,#333);border-left:1px solid #555;box-sizing:border-box"></div>
</div></body></html>
